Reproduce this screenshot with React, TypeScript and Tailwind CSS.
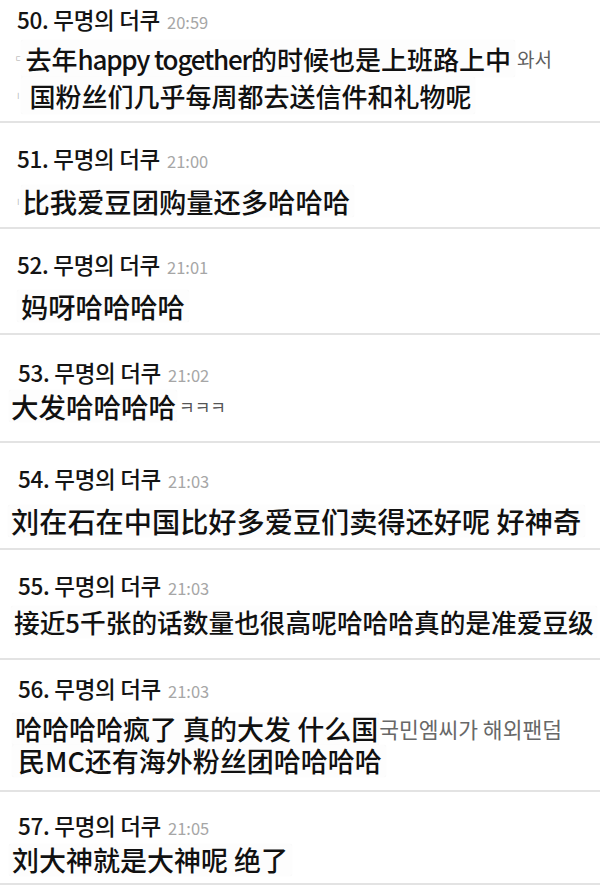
const zh = { fontFamily: '"Noto Sans CJK SC", "Noto Sans", sans-serif' };
const ko = { fontFamily: '"Noto Sans CJK KR", "Noto Sans", sans-serif' };

type Line = {
  text: React.ReactNode;
  pre?: string;
  post?: string;
  postCls?: string;
  box: string;
};

type Comment = {
  no: number;
  time: string;
  wrap: string;
  head: string;
  body: string;
  lines: Line[];
};

const comments: Comment[] = [
  {
    no: 50,
    time: "20:59",
    wrap: "pt-[7px] pb-[7px]",
    head: "pl-[17px]",
    body: "mt-[9px] leading-[37px] text-[26px]",
    lines: [
      {
        pre: "ㄷ",
        text: (
          <>
            去年<span className="tracking-[-1.2px]">happy together</span>的时候也是上班路上中
          </>
        ),
        post: "와서",
        postCls: "ml-[2px] text-[19px] leading-none text-[#5e5e5e]",
        box: "pl-[4px] pr-[4px]",
      },
      { pre: "ㅣ", text: "国粉丝们几乎每周都去送信件和礼物呢", box: "pl-[8px] pr-[4px]" },
    ],
  },
  {
    no: 51,
    time: "21:00",
    wrap: "pt-[23px] pb-[10px]",
    head: "pl-[17px]",
    body: "mt-[15px] leading-[32px] text-[27.3px]",
    lines: [{ pre: "ㅣ", text: "比我爱豆团购量还多哈哈哈", box: "pl-[1px] pr-[4px]" }],
  },
  {
    no: 52,
    time: "21:01",
    wrap: "pt-[23px] pb-[11px]",
    head: "pl-[17px]",
    body: "mt-[14px] leading-[32px] text-[27.3px]",
    lines: [{ text: "妈呀哈哈哈哈", box: "ml-[17px] pl-[4px] pr-[4px]" }],
  },
  {
    no: 53,
    time: "21:02",
    wrap: "pt-[25px] pb-[19px]",
    head: "pl-[18px]",
    body: "mt-[6px] leading-[32px] text-[27.5px]",
    lines: [
      {
        text: "大发哈哈哈哈",
        post: "ㅋㅋㅋ",
        postCls: "ml-[2px] text-[17px] leading-none text-[#555]",
        box: "ml-[9px] pl-[2px] pr-[1px]",
      },
    ],
  },
  {
    no: 54,
    time: "21:03",
    wrap: "pt-[23px] pb-[11px]",
    head: "pl-[18px]",
    body: "mt-[15px] leading-[32px] text-[28.2px]",
    lines: [{ text: "刘在石在中国比好多爱豆们卖得还好呢 好神奇", box: "ml-[8px] pl-[3px] pr-[4px]" }],
  },
  {
    no: 55,
    time: "21:03",
    wrap: "pt-[23px] pb-[20px]",
    head: "pl-[18px]",
    body: "mt-[9px] leading-[32px] text-[25.7px]",
    lines: [{ text: "接近5千张的话数量也很高呢哈哈哈真的是准爱豆级", box: "ml-[11px] pl-[3px] pr-[3px]" }],
  },
  {
    no: 56,
    time: "21:03",
    wrap: "pt-[16px] pb-[13px]",
    head: "pl-[18px]",
    body: "mt-[13px] leading-[32px] text-[27px]",
    lines: [
      {
        text: "哈哈哈哈疯了 真的大发 什么国",
        post: "국민엠씨가 해외팬덤",
        postCls: "text-[21.5px] leading-none text-[#686868]",
        box: "ml-[12px] pl-[3px] pr-[1px]",
      },
      { text: "民MC还有海外粉丝团哈哈哈哈", box: "ml-[12px] pl-[6px] pr-[4px]" },
    ],
  },
  {
    no: 57,
    time: "21:05",
    wrap: "pt-[21px] pb-[7px]",
    head: "pl-[18px]",
    body: "mt-[7px] leading-[32px] text-[27px]",
    lines: [{ text: "刘大神就是大神呢 绝了", box: "ml-[9px] pl-[3px] pr-[4px]" }],
  },
];

function CommentRow({ c }: { c: Comment }) {
  return (
    <div className={`border-b-2 border-[#e3e3e3] ${c.wrap}`}>
      <div className={`flex h-6 items-baseline gap-[7px] leading-6 ${c.head}`}>
        <span style={ko} className="text-[22.5px] font-medium tracking-[-0.3px] text-[#141414]">
          {c.no}. 무명의 더쿠
        </span>
        <span style={ko} className="text-[16.5px] text-[#a6a6a6]">
          {c.time}
        </span>
      </div>
      <div className={c.body}>
        {c.lines.map((l, i) => (
          <div key={i} className="flex items-center">
            {l.pre && (
              <span style={ko} className="ml-[15px] text-[7px] leading-none text-[#a8a8a8]">
                {l.pre}
              </span>
            )}
            <span
              style={zh}
              className={`whitespace-pre rounded-[2px] bg-[#fdfdfd] font-medium text-[#111] shadow-[0_0_1px_rgba(0,0,0,0.07)] ${l.box}`}
            >
              {l.text}
            </span>
            {l.post && (
              <span style={ko} className={l.postCls}>
                {l.post}
              </span>
            )}
          </div>
        ))}
      </div>
    </div>
  );
}

export default function App() {
  return (
    <div className="min-h-[891px] w-[600px] bg-white">
      {comments.map((c) => (
        <CommentRow key={c.no} c={c} />
      ))}
    </div>
  );
}
